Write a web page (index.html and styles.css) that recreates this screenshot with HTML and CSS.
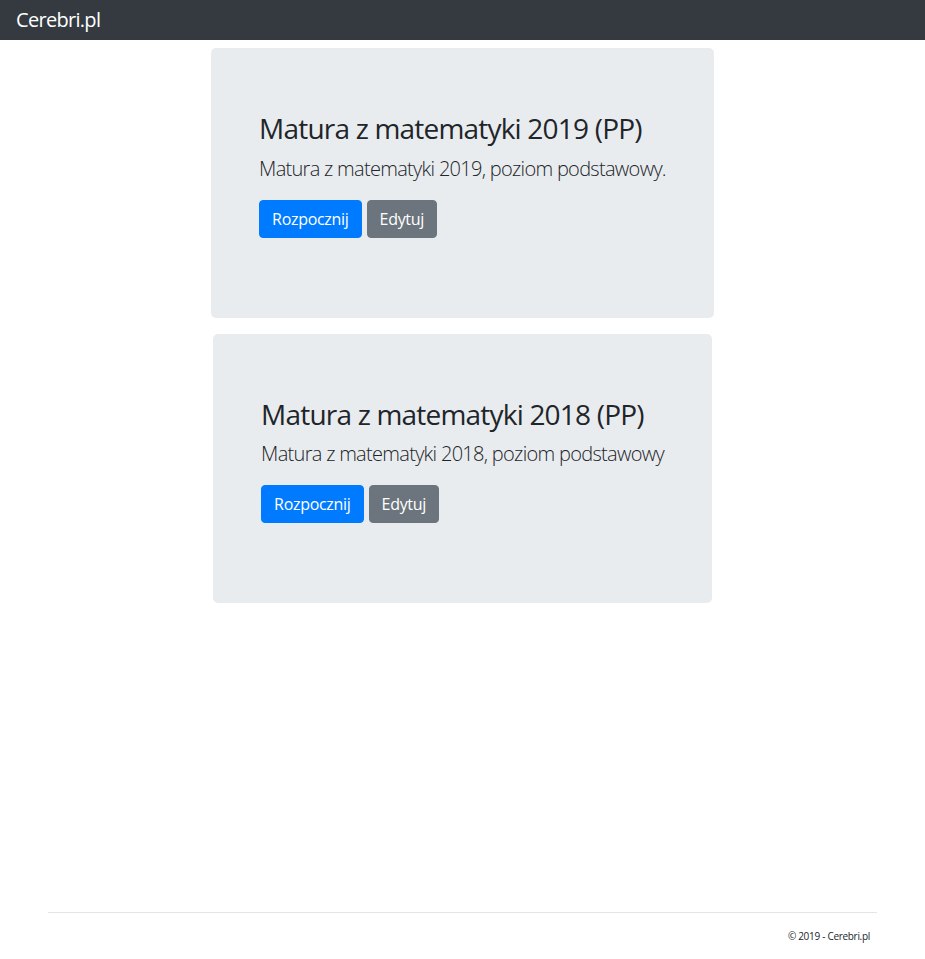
FILE: index.html
```html
<!DOCTYPE html>
<html lang="pl">
<head>
<meta charset="utf-8">
<title>Cerebri.pl</title>
<link rel="stylesheet" href="styles.css">
</head>
<body>
<header class="navbar">
  <a class="brand" href="#">Cerebri.pl</a>
</header>
<main class="main">
  <section class="jumbotron">
    <h3 class="title">Matura z matematyki 2019 (PP)</h3>
    <p class="lead">Matura z matematyki 2019, poziom podstawowy.</p>
    <p class="actions"><a class="btn btn-primary" href="#">Rozpocznij</a><a class="btn btn-secondary" href="#">Edytuj</a></p>
  </section>
  <section class="jumbotron">
    <h3 class="title">Matura z matematyki 2018 (PP)</h3>
    <p class="lead">Matura z matematyki 2018, poziom podstawowy</p>
    <p class="actions"><a class="btn btn-primary" href="#">Rozpocznij</a><a class="btn btn-secondary" href="#">Edytuj</a></p>
  </section>
</main>
<footer class="footer">
  <p class="copy">&copy; 2019 - Cerebri.pl</p>
</footer>
</body>
</html>
```
FILE: styles.css
```css
* { box-sizing: border-box; }
html, body { height: 100%; }
body {
  margin: 0;
  font-family: "Open Sans", "Noto Sans", Arial, sans-serif;
  font-size: 16px;
  line-height: 1.5;
  color: #212529;
  background: #fff;
  display: flex;
  flex-direction: column;
  min-height: 959px;
}
.navbar {
  height: 40px;
  background: #343a40;
  display: flex;
  align-items: center;
  padding: 0 16px;
}
.brand {
  color: #fff;
  text-decoration: none;
  font-size: 20px;
  line-height: 30px;
  letter-spacing: -0.7px;
}
.main {
  padding-top: 8px;
  display: flex;
  flex-direction: column;
  align-items: center;
  gap: 16px;
}
.jumbotron {
  background: #e9ecef;
  border-radius: 5px;
  padding: 64px 48px;
}
.title {
  margin: 0 0 8px;
  font-size: 28px;
  font-weight: 400;
  line-height: 1.2;
  letter-spacing: -0.8px;
}
.lead {
  margin: 0 0 16px;
  font-size: 20px;
  font-weight: 300;
  line-height: 1.5;
  letter-spacing: -0.7px;
}
.actions {
  margin: 0 0 16px;
  display: flex;
  gap: 5px;
}
.btn {
  display: inline-block;
  padding: 6px 12px;
  font-size: 16px;
  line-height: 24px;
  border: 1px solid transparent;
  border-radius: 4px;
  color: #fff;
  text-decoration: none;
  letter-spacing: -0.3px;
}
.btn-primary { background: #007bff; border-color: #007bff; }
.btn-secondary { background: #6c757d; border-color: #6c757d; }
.footer {
  margin: auto 48px 0;
  border-top: 1px solid #e5e5e5;
  height: 47px;
  display: flex;
  justify-content: flex-end;
  align-items: center;
  padding: 0 7px 0 0;
}
.copy {
  margin: 0;
  font-size: 10px;
  line-height: 14px;
  color: #212529;
  padding-bottom: 0;
  letter-spacing: -0.3px;
}
```
